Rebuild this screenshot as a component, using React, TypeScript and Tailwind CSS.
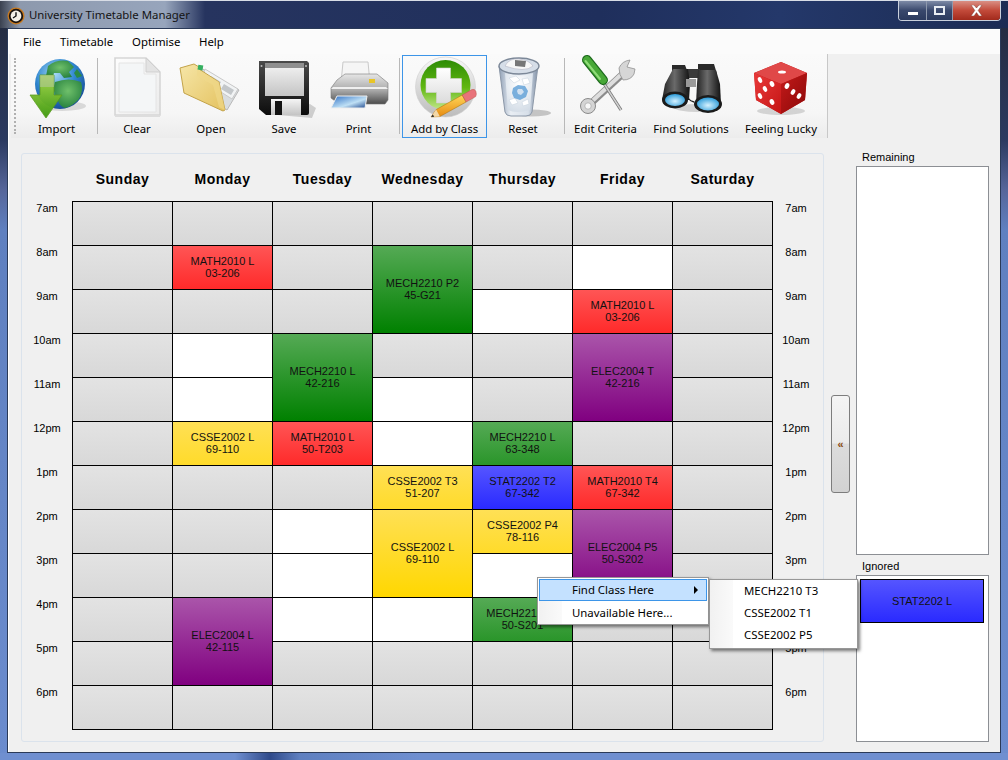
import React from "react";

const Icon = ({ children }: { children: React.ReactNode }) => (
  <svg width="60" height="60" viewBox="0 0 60 60" className="block overflow-visible">{children}</svg>
);

const ImportIcon = () => (
  <Icon>
    <defs>
      <radialGradient id="gl" cx="0.4" cy="0.3" r="0.8"><stop offset="0" stopColor="#a5d8f5" /><stop offset="0.5" stopColor="#2f86cf" /><stop offset="1" stopColor="#123f88" /></radialGradient>
      <linearGradient id="ar" x1="0" y1="0" x2="0" y2="1"><stop offset="0" stopColor="#a8d848" /><stop offset="1" stopColor="#3f9a10" /></linearGradient>
      <radialGradient id="la" cx="0.5" cy="0.4" r="0.7"><stop offset="0" stopColor="#6fc06a" /><stop offset="1" stopColor="#1f7a3a" /></radialGradient>
    </defs>
    <ellipse cx="35" cy="50" rx="24" ry="5" fill="#000" opacity="0.12" />
    <circle cx="33" cy="28" r="25" fill="url(#gl)" />
    <path d="M21 10q9-7 20-5l6 6-5 5 3 5 -8 1-4-5-6 0-2 5-6-2z" fill="url(#la)" />
    <path d="M28 26q14-5 26 0 3 8-2 17-6 7-14 9-6-2-8-10-5-7-2-16z" fill="url(#la)" />
    <path d="M50 13l5 7-5 2-3-5z" fill="#2a8a46" />
    <path d="M13 19h14v20h8L19 62 3 39h10z" fill="url(#ar)" stroke="#5b9a1e" strokeWidth="0.8" opacity="0.97" />
    <path d="M13 19h14v12H13z" fill="#b5c9a0" opacity="0.55" />
  </Icon>
);

const ClearIcon = () => (
  <Icon>
    <defs><linearGradient id="dc" x1="0" y1="0" x2="1" y2="1"><stop offset="0" stopColor="#fdfdfd" /><stop offset="1" stopColor="#ececec" /></linearGradient></defs>
    <path d="M8 2h31l14 14v43H8z" fill="url(#dc)" stroke="#d6d6d6" strokeWidth="1.6" />
    <path d="M12 7h25v11h12v38H12z" fill="#f4f6f7" stroke="#e4e4e4" />
    <path d="M39 2v14h14z" fill="#e3e3e3" stroke="#cfcfcf" />
    <rect x="8" y="59" width="45" height="2" fill="#ddd" />
  </Icon>
);

const OpenIcon = () => (
  <Icon>
    <defs><linearGradient id="fo" x1="0" y1="0" x2="1" y2="1"><stop offset="0" stopColor="#f6e6a8" /><stop offset="1" stopColor="#e4c25f" /></linearGradient></defs>
    <path d="M20 12l38 22-12 20-30-18z" fill="#d9dde0" stroke="#b9b9b9" />
    <path d="M24 13l33 20-6 10-30-19z" fill="#f1f3f4" stroke="#c9c9c9" />
    <path d="M30 20l10 6-3 5-10-6zM43 28l10 6-3 5-10-6z" fill="#c3c7ca" />
    <path d="M-1 12l14-4 5 3 0 2 20 13 6 28-2 1L3 37z" fill="url(#fo)" stroke="#c3a34a" />
    <path d="M16 13l22 13 6 28-6-3-6-22-16-9z" fill="#efd98b" opacity="0.65" />
    <rect x="17" y="9" width="5" height="5" fill="#35b060" transform="rotate(10 19 11)" />
  </Icon>
);

const SaveIcon = () => (
  <Icon>
    <defs>
      <linearGradient id="fb" x1="0" y1="0" x2="0" y2="1"><stop offset="0" stopColor="#4a4a4a" /><stop offset="1" stopColor="#0c0c0c" /></linearGradient>
      <linearGradient id="fl" x1="0" y1="0" x2="0" y2="1"><stop offset="0" stopColor="#f5f5f5" /><stop offset="1" stopColor="#c4c4c4" /></linearGradient>
    </defs>
    <path d="M12 58l46 4 4-10-6-4z" fill="#000" opacity="0.16" />
    <path d="M5 5h48l2 2v50q0 2-2 2H12l-7-6z" fill="url(#fb)" />
    <path d="M11 7h39v33H11z" fill="url(#fl)" />
    <rect x="11" y="7" width="39" height="5" fill="#8f8f8f" />
    <path d="M17 43h30v16H17z" fill="url(#fl)" />
    <rect x="21" y="45" width="7" height="14" fill="#111" />
    <circle cx="7.5" cy="10" r="1" fill="#bbb" /><circle cx="52" cy="10" r="1" fill="#bbb" />
  </Icon>
);

const PrintIcon = () => (
  <Icon>
    <defs>
      <linearGradient id="pr" x1="0" y1="0" x2="0" y2="1"><stop offset="0" stopColor="#e6e6e6" /><stop offset="0.55" stopColor="#a8a8a8" /><stop offset="1" stopColor="#4c4c4c" /></linearGradient>
      <linearGradient id="ph" x1="0" y1="0" x2="1" y2="1"><stop offset="0" stopColor="#2d6fc4" /><stop offset="0.6" stopColor="#bfe0f5" /><stop offset="1" stopColor="#20498e" /></linearGradient>
    </defs>
    <path d="M14 6h25l2 21H12z" fill="#f5f5f5" stroke="#c9c9c9" />
    <path d="M8 24l8-6h32l11 9v17l-3 4H10l-8-6V32z" fill="url(#pr)" stroke="#777" strokeWidth="0.6" />
    <path d="M4 31h53l2 2H2z" fill="#efefef" />
    <rect x="40" y="23" width="6" height="4" fill="#e8c528" />
    <path d="M8 40h30l-2 12H2z" fill="url(#ph)" stroke="#eee" strokeWidth="1" />
  </Icon>
);

const AddIcon = () => (
  <Icon>
    <defs>
      <linearGradient id="ri" x1="0" y1="0" x2="0" y2="1"><stop offset="0" stopColor="#f8f8f8" /><stop offset="1" stopColor="#bcbcbc" /></linearGradient>
      <linearGradient id="gn" x1="0" y1="0" x2="0" y2="1"><stop offset="0" stopColor="#2d8c05" /><stop offset="0.55" stopColor="#61b712" /><stop offset="1" stopColor="#c3e88a" /></linearGradient>
      <linearGradient id="cr" x1="0" y1="0" x2="0" y2="1"><stop offset="0" stopColor="#ffffff" /><stop offset="1" stopColor="#dcdcdc" /></linearGradient>
      <linearGradient id="pc" x1="0" y1="0" x2="0" y2="1"><stop offset="0" stopColor="#ffd75a" /><stop offset="1" stopColor="#e68a10" /></linearGradient>
    </defs>
    <ellipse cx="30.5" cy="31" rx="30" ry="30" fill="url(#ri)" stroke="#cfcfcf" strokeWidth="0.6" />
    <circle cx="30.5" cy="29" r="25" fill="url(#gn)" />
    <path d="M21.5 12h14v10.5h11v14h-11V47h-14V36.5H11v-14h10.5z" fill="url(#cr)" stroke="#d2d2d2" strokeWidth="0.6" />
    <path d="M16 61l5.1-7.4 26.1-14.6 3.9 7L24.9 60.6z" fill="url(#pc)" stroke="#a96a08" strokeWidth="0.5" />
    <path d="M16 61l5.1-7.4 3.8 7z" fill="#f3d8a8" />
    <path d="M16 61l1.8-2.6 1.4 2.4z" fill="#222" />
    <path d="M47.2 39l9.7-5.4q3-1 4 2t-0.2 5l-9.6 5.4z" fill="#e8737a" stroke="#b54" strokeWidth="0.5" />
  </Icon>
);

const ResetIcon = () => (
  <Icon>
    <defs>
      <linearGradient id="bn" x1="0" y1="0" x2="1" y2="0"><stop offset="0" stopColor="#8f9fb5" /><stop offset="0.3" stopColor="#e9eef4" /><stop offset="0.75" stopColor="#d7dfe9" /><stop offset="1" stopColor="#7f8fa5" /></linearGradient>
      <radialGradient id="bp" cx="0.5" cy="0.3" r="0.8"><stop offset="0" stopColor="#ffffff" /><stop offset="1" stopColor="#cfd9e4" /></radialGradient>
    </defs>
    <ellipse cx="38" cy="57" rx="20" ry="3.5" fill="#000" opacity="0.2" />
    <path d="M6 10l6 46q1 4 6 4h15q5 0 6-4l6-46z" fill="url(#bn)" stroke="#8c98a8" />
    <ellipse cx="26" cy="10" rx="20" ry="8" fill="#d6dee8" stroke="#7c8898" strokeWidth="1.4" />
    <path d="M12 10q4-8 14-7t14 7q-8 7-28 0z" fill="#f7f7f7" stroke="#aab" strokeWidth="0.5" />
    <path d="M22 4l11 1-1 6-10-1z" fill="#777" />
    <path d="M12 17l3 37q8 4 22 0l3-37q-14 5-28 0z" fill="url(#bp)" />
    <path d="M16 22l7-2 4 4-6 3zM29 23l6-1 2 5-6 2zM16 44l6-2 3 5-6 2zM29 46l6-3 1 5-6 2z" fill="#fff" stroke="#c4d0dc" strokeWidth="0.5" />
    <path d="M20 32l5-3 7 1 3 5-2 6-6 3-6-2-2-5z" fill="#5b9ed6" opacity="0.8" />
    <path d="M25 33l4 0 2 3-3 3-3-1-1-3z" fill="#dfe9f3" opacity="0.85" />
  </Icon>
);

const EditIcon = () => (
  <Icon>
    <line x1="12" y1="50" x2="50" y2="15" stroke="#8c8c8c" strokeWidth="7" />
    <line x1="12" y1="49" x2="50" y2="14" stroke="#dedede" strokeWidth="4" />
    <circle cx="12" cy="50" r="7.5" fill="#d4d4d4" stroke="#8a8a8a" />
    <circle cx="12" cy="50" r="3.2" fill="#f8f8f8" stroke="#999" strokeWidth="0.6" />
    <path d="M43 12q3-7 11-8l-3 7 8 2-1 5q-3 6-11 6-4-5-4-12z" fill="#d6d6d6" stroke="#858585" strokeWidth="0.7" />
    <line x1="27" y1="26" x2="45" y2="54" stroke="#777" strokeWidth="3.2" />
    <line x1="27" y1="26" x2="45" y2="54" stroke="#d0d0d0" strokeWidth="1.4" />
    <line x1="11" y1="4" x2="27" y2="24" stroke="#1d6a1d" strokeWidth="10" strokeLinecap="round" />
    <line x1="11" y1="4" x2="27" y2="24" stroke="#48a838" strokeWidth="7.6" strokeLinecap="round" />
    <line x1="9.5" y1="5" x2="24" y2="23" stroke="#8fdc78" strokeWidth="2" strokeLinecap="round" />
  </Icon>
);

const FindIcon = () => (
  <Icon>
    <defs>
      <linearGradient id="bi" x1="0" y1="0" x2="1" y2="0"><stop offset="0" stopColor="#222" /><stop offset="0.45" stopColor="#6a6a6a" /><stop offset="1" stopColor="#111" /></linearGradient>
      <radialGradient id="le" cx="0.5" cy="0.6" r="0.6"><stop offset="0" stopColor="#d6f2ff" /><stop offset="1" stopColor="#2a9ad8" /></radialGradient>
    </defs>
    <ellipse cx="36" cy="52" rx="22" ry="4" fill="#000" opacity="0.15" />
    <path d="M11 9h13l3 8H11zM37 8h16l3 10H37z" fill="#2a2a2a" />
    <path d="M21 13h18v9H21z" fill="#3a3a3a" />
    <path d="M12 13h15l2 15-1 16H1l3-16z" fill="url(#bi)" />
    <path d="M37 14h18l4 14 1 20H35l1-20z" fill="url(#bi)" />
    <path d="M25 23h10v8H25z" fill="#9a9a9a" />
    <path d="M27 36q-2 8 6 10" fill="none" stroke="#222" strokeWidth="1.3" />
    <ellipse cx="14" cy="44" rx="13" ry="8.5" fill="#1b1b1b" />
    <ellipse cx="14" cy="44" rx="10" ry="6" fill="url(#le)" />
    <ellipse cx="47" cy="48" rx="14" ry="9" fill="#1b1b1b" />
    <ellipse cx="47" cy="48" rx="11" ry="6.5" fill="url(#le)" />
  </Icon>
);

const LuckyIcon = () => (
  <Icon>
    <defs>
      <linearGradient id="dl" x1="0" y1="0" x2="1" y2="1"><stop offset="0" stopColor="#e93a3a" /><stop offset="1" stopColor="#c51515" /></linearGradient>
      <linearGradient id="dr" x1="0" y1="0" x2="1" y2="1"><stop offset="0" stopColor="#c41a1a" /><stop offset="1" stopColor="#8a0808" /></linearGradient>
    </defs>
    <ellipse cx="30" cy="55" rx="24" ry="4" fill="#000" opacity="0.14" />
    <path d="M30 6l26 11-2 27-24 14-25-14-2-27z" fill="#c21818" />
    <path d="M30 6l26 11-26 11L3 17z" fill="#e04848" />
    <path d="M3 17l27 11v30L5 44z" fill="url(#dl)" />
    <path d="M56 17v0L30 28v30l24-14z" fill="url(#dr)" />
    <ellipse cx="31" cy="16" rx="4" ry="1.6" fill="#fff" />
    <g fill="#fff">
      <ellipse cx="9" cy="24" rx="2" ry="3" transform="rotate(-25 9 24)" />
      <ellipse cx="21" cy="28" rx="2.2" ry="3" transform="rotate(-25 21 28)" />
      <ellipse cx="14" cy="33" rx="2" ry="3" transform="rotate(-25 14 33)" />
      <ellipse cx="9" cy="40" rx="2" ry="3" transform="rotate(-25 9 40)" />
      <ellipse cx="21" cy="46" rx="2.2" ry="3" transform="rotate(-25 21 46)" />
      <ellipse cx="36" cy="30" rx="2.2" ry="3" transform="rotate(25 36 30)" />
      <ellipse cx="42" cy="36" rx="2" ry="3" transform="rotate(30 42 36)" />
      <ellipse cx="48" cy="40" rx="2" ry="3" transform="rotate(30 48 40)" />
    </g>
  </Icon>
);

type Tool = { label?: string; w?: string; icon?: React.ReactNode; active?: boolean; sep?: string };
const tools: Tool[] = [
  { label: "Import", w: "w-[79px]", icon: <ImportIcon /> },
  { sep: "ml-[1px] mr-[1px]" },
  { label: "Clear", w: "w-[76px]", icon: <ClearIcon /> },
  { label: "Open", w: "w-[72px]", icon: <OpenIcon /> },
  { label: "Save", w: "w-[74px]", icon: <SaveIcon /> },
  { label: "Print", w: "w-[75px]", icon: <PrintIcon /> },
  { sep: "ml-[3px] mr-[2px]" },
  { label: "Add by Class", w: "w-[85px]", icon: <AddIcon />, active: true },
  { label: "Reset", w: "w-[72px]", icon: <ResetIcon /> },
  { sep: "ml-[5px] mr-[1px]" },
  { label: "Edit Criteria", w: "w-[79px]", icon: <EditIcon /> },
  { label: "Find Solutions", w: "w-[92px]", icon: <FindIcon /> },
  { label: "Feeling Lucky", w: "w-[88px]", icon: <LuckyIcon /> },
];

const styles: Record<string, string> = {
  g1: "bg-[linear-gradient(#e3e3e3,#d8d8d8)]",
  w1: "bg-white",
  r1: "bg-[linear-gradient(#ff5555,#ff2a2a)]",
  n1: "bg-[linear-gradient(#55aa55,#2a952a)]",
  n2: "bg-[linear-gradient(#55aa55,#008000)]",
  y1: "bg-[linear-gradient(#ffe055,#ffdb2a)]",
  y2: "bg-[linear-gradient(#ffe055,#ffd700)]",
  b1: "bg-[linear-gradient(#5555ff,#2a2aff)]",
  p2: "bg-[linear-gradient(#aa55aa,#800080)]",
};

type Cell = [string, string?, string?];
const g: Cell = ["g1"];
const w: Cell = ["w1"];
const columns: Cell[][] = [
  [g, g, g, g, g, g, g, g, g, g, g, g],
  [g, ["r1", "MATH2010 L", "03-206"], g, w, w, ["y1", "CSSE2002 L", "69-110"], g, g, g, ["p2", "ELEC2004 L", "42-115"], g],
  [g, g, g, ["n2", "MECH2210 L", "42-216"], ["r1", "MATH2010 L", "50-T203"], g, w, w, w, g, g],
  [g, ["n2", "MECH2210 P2", "45-G21"], g, w, w, ["y1", "CSSE2002 T3", "51-207"], ["y2", "CSSE2002 L", "69-110"], w, g, g],
  [g, g, w, g, g, ["n1", "MECH2210 L", "63-348"], ["b1", "STAT2202 T2", "67-342"], ["y1", "CSSE2002 P4", "78-116"], w, ["n1", "MECH2210 T1", "50-S201"], g, g],
  [g, w, ["r1", "MATH2010 L", "03-206"], ["p2", "ELEC2004 T", "42-216"], g, ["r1", "MATH2010 T4", "67-342"], ["p2", "ELEC2004 P5", "50-S202"], g, g, g],
  [g, g, g, g, g, g, g, g, g, g, g, g],
];

const days = ["Sunday", "Monday", "Tuesday", "Wednesday", "Thursday", "Friday", "Saturday"];
const times = ["7am", "8am", "9am", "10am", "11am", "12pm", "1pm", "2pm", "3pm", "4pm", "5pm", "6pm"];
const sans = "font-['Noto_Sans','Open_Sans',sans-serif]";
const arial = "font-['Liberation_Sans',Arial,sans-serif]";

const TimeCol = ({ className }: { className: string }) => (
  <div className={`flex flex-col ${className}`}>
    {times.map((t) => (
      <div key={t} className="h-[44px] pt-px text-center text-[11px] leading-[13px] text-black">{t}</div>
    ))}
  </div>
);

export default function App() {
  return (
    <div className="relative h-[760px] w-[1008px] overflow-hidden bg-[linear-gradient(180deg,#232a3c_0px,#2b3a60_140px,#56669a_190px,#5f80c0_230px,#6b8cce_100%)] text-black">
      {/* title bar */}
      <div className="relative flex h-[28px] items-start border-t border-[#d8dde6] bg-[linear-gradient(90deg,#3a4150_0px,#8d99ad_20px,#97a5bc_165px,#26345f_205px,#1f2f5c_600px,#24386a_780px,#1c2c54_1008px)]">
        <svg width="18" height="18" viewBox="0 0 18 18" className="ml-[7px] mt-[6px] shrink-0">
          <circle cx="9" cy="9" r="8.5" fill="#c87a20" />
          <circle cx="9" cy="9" r="7.2" fill="#1a1410" />
          <circle cx="9" cy="9" r="5.4" fill="#f4f1e8" />
          <path d="M9 5.2V9l-3 2" fill="none" stroke="#111" strokeWidth="1.4" />
        </svg>
        <span className={`ml-[4px] mt-[6px] whitespace-nowrap text-[11.4px] leading-[16px] text-[#141414] ${sans}`}>University Timetable Manager</span>
        <div className="ml-auto mr-[7px] flex h-[20px] overflow-hidden rounded-b-[4px] border border-t-0 border-[#c9d0dc]">
          <div className="flex w-[28px] items-end justify-center border-r border-[#8e99ad] bg-[linear-gradient(#7d8aa6,#39486c_50%,#2b3a5e)] pb-[5px]">
            <div className="h-[3px] w-[10px] bg-white" />
          </div>
          <div className="flex w-[26px] items-center justify-center border-r border-[#8e99ad] bg-[linear-gradient(#7d8aa6,#39486c_50%,#2b3a5e)]">
            <div className="h-[9px] w-[11px] border-2 border-[#e8ecf2]" />
          </div>
          <div className="flex w-[47px] items-center justify-center bg-[linear-gradient(#d98f84,#c24a3a_50%,#a12a1c)]">
            <svg width="13" height="11" viewBox="0 0 13 11"><path d="M1 0h3l2.5 3L9 0h3L8.2 5.4 12 11H9L6.5 7.6 4 11H1l3.8-5.6z" fill="#fff" stroke="#7a3a30" strokeWidth="0.5" /></svg>
          </div>
        </div>
      </div>

      {/* client area */}
      <div className="ml-[7px] h-[725px] w-[994px] border border-[#2a3a58]">
        <div className="flex h-full flex-col border-l border-t border-white bg-[#f0f0f0]">
          {/* menu */}
          <div className={`flex h-[24px] items-center bg-[#fbfbfb] pl-[14px] text-[11.4px] ${sans}`}>
            <span className="w-[37px]">File</span>
            <span className="w-[72px]">Timetable</span>
            <span className="w-[67px]">Optimise</span>
            <span>Help</span>
          </div>
          <div className="flex flex-1">
            {/* left column */}
            <div className="w-[820px] shrink-0">
              <div className={`ml-[2px] flex h-[84px] w-[817px] items-start border-r border-[#c8c8c8] bg-[linear-gradient(#fafafa,#f6f6f6_70%,#ececec)] text-[11.4px] ${sans}`}>
                <div className="ml-[3px] mr-[1px] mt-[4px] h-[76px] w-[2px] border-l-2 border-dotted border-[#b0b0b0]" />
                {tools.map((t, i) =>
                  t.sep ? (
                    <div key={i} className={`mt-[4px] h-[76px] w-[1px] bg-[#b8b8b8] ${t.sep}`} />
                  ) : (
                    <div key={i} className={`mt-px flex h-[83px] shrink-0 flex-col items-center ${t.w} ${t.active ? "border border-[#3d95e8]" : "border border-transparent"}`}>
                      <div className="h-[60px]">{t.icon}</div>
                      <span className="mt-[5px] whitespace-nowrap leading-[16px]">{t.label}</span>
                    </div>
                  )
                )}
              </div>
              {/* timetable panel */}
              <div className={`ml-[12px] mt-[15px] h-[589px] w-[803px] rounded-[3px] border border-[#dbe3ec] bg-[#f0f0f0] ${arial}`}>
                <div className="ml-[50px] flex h-[47px] items-end pb-[14px]">
                  {days.map((d) => (
                    <div key={d} className="w-[100px] pl-px text-center text-[14px] font-bold leading-[16px] tracking-[0.5px]">{d}</div>
                  ))}
                </div>
                <div className="flex">
                  <TimeCol className="w-[50px]" />
                  <div className="flex border-l border-t border-black">
                    {columns.map((col, c) => (
                      <div key={c} className="w-[100px] border-r border-black">
                        {col.map((cell, r) => {
                          const tall = cell[0].endsWith("2");
                          return (
                            <div key={r} className={`flex flex-col items-center justify-center border-b border-black pb-[2px] text-[11px] leading-[12px] text-[#111] ${tall ? "h-[88px]" : "h-[44px]"} ${styles[cell[0]]}`}>
                              {cell[1] && <span className="whitespace-nowrap">{cell[1]}</span>}
                              {cell[2] && <span>{cell[2]}</span>}
                            </div>
                          );
                        })}
                      </div>
                    ))}
                  </div>
                  <TimeCol className="w-[46px]" />
                </div>
              </div>
            </div>
            {/* right column */}
            <div className={`flex ${arial}`}>
              <div className="ml-[2px] mt-[341px] flex h-[98px] w-[19px] items-center justify-center rounded-[3px] border border-[#7d7d7d] bg-[linear-gradient(#f4f4f4,#ebebeb_49%,#dcdcdc_50%,#d2d2d2)] text-[11px] font-bold leading-none text-[#8a4a10]">«</div>
              <div className="ml-[6px] w-[133px] pt-[97px] text-[11px] leading-[13px]">
                <div className="pl-[6px]">Remaining</div>
                <div className="mt-[2px] h-[389px] border border-[#8c8f94] bg-white" />
                <div className="mt-[5px] pl-[6px]">Ignored</div>
                <div className="mt-[2px] h-[167px] border border-[#8c8f94] bg-white p-[3px]">
                  <div className={`flex h-[44px] w-[124px] items-center justify-center border border-black text-[#111] ${styles.b1}`}>STAT2202 L</div>
                </div>
              </div>
            </div>
          </div>
        </div>
      </div>
      <div className="h-[7px] bg-[linear-gradient(90deg,#6f8fd0_0px,#6f8fd0_235px,#2f4a8a_270px,#5f80c0_300px,#6f8fd0_420px,#6f8fd0_1008px)]" />

      {/* context menu */}
      <div className={`absolute left-[537px] top-[577px] h-[48px] w-[172px] border border-[#979797] bg-white p-px text-[11.4px] shadow-[2px_2px_3px_rgba(0,0,0,0.5)] ${sans}`}>
        <div className="flex h-[22px] items-center border border-[#3d95e8] bg-[#c4e1ff] pl-[32px]">
          <span>Find Class Here</span>
          <span className="ml-auto mr-[8px] h-0 w-0 border-y-[4px] border-l-[4px] border-y-transparent border-l-black" />
        </div>
        <div className="flex h-[23px] items-center">
          <div className="h-full w-[23px] bg-[linear-gradient(90deg,#f1f1f1,#fafafa)]" />
          <span className="ml-[10px]">Unavailable Here...</span>
        </div>
      </div>
      <div className={`absolute left-[709px] top-[579px] flex h-[70px] w-[149px] border border-[#979797] bg-white text-[11.4px] shadow-[2px_2px_3px_rgba(0,0,0,0.5)] ${sans}`}>
        <div className="h-full w-[23px] bg-[linear-gradient(90deg,#f1f1f1,#fafafa)]" />
        <div className="flex flex-col pl-[11px]">
          {["MECH2210 T3", "CSSE2002 T1", "CSSE2002 P5"].map((m) => (
            <div key={m} className="flex h-[22px] items-center">{m}</div>
          ))}
        </div>
      </div>
    </div>
  );
}
